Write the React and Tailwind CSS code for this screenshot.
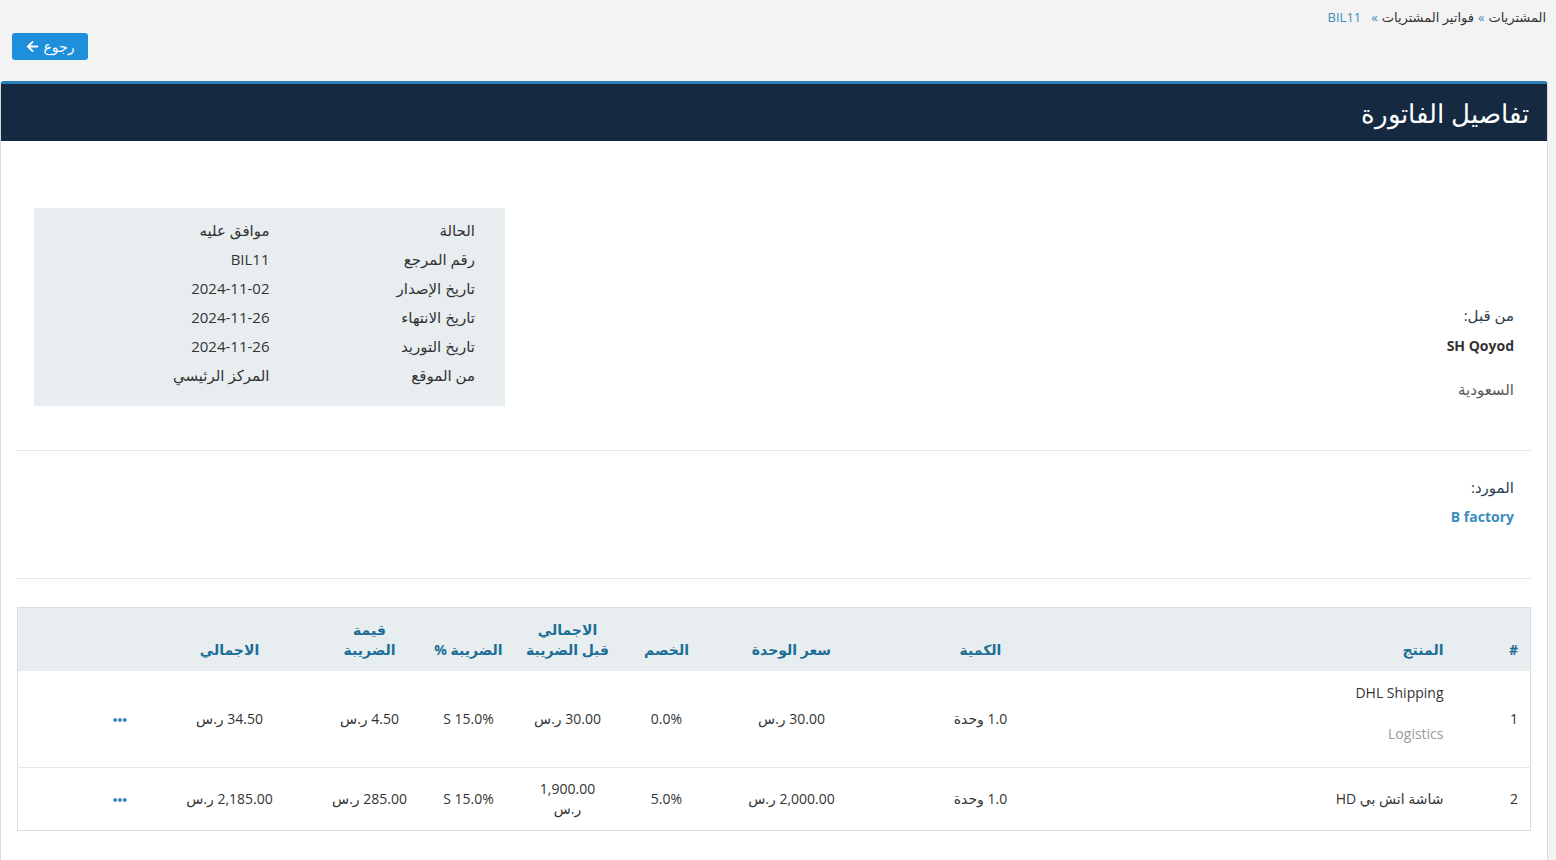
import React from "react";
import { FaArrowLeft, FaEllipsisH } from "react-icons/fa";

const infoRows = [
  ["الحالة", "موافق عليه"],
  ["رقم المرجع", "BIL11"],
  ["تاريخ الإصدار", "2024-11-02"],
  ["تاريخ الانتهاء", "2024-11-26"],
  ["تاريخ التوريد", "2024-11-26"],
  ["من الموقع", "المركز الرئيسي"],
];

export default function App() {
  return (
    <div
      dir="rtl"
      className="min-h-[860px] bg-[#f3f3f3] font-['Open_Sans','DejaVu_Sans',sans-serif] text-[#333]"
    >
      {/* breadcrumb */}
      <div className="flex items-center gap-[4px] pr-[10px] pt-[8px] h-[26px] text-[13px] leading-[18px]">
        <span>المشتريات</span>
        <span className="text-[#3c8dbc]">»</span>
        <span>فواتير المشتريات</span>
        <span className="text-[#3c8dbc]">»</span>
        <span className="text-[#3c8dbc] mr-[6px]">BIL11</span>
      </div>

      {/* back button */}
      <div className="flex justify-end pl-[12px] mt-[7px]">
        <button className="h-[27px] w-[76px] rounded-[3px] bg-[#1d8fdb] text-white text-[14px] flex items-center justify-center gap-[5px]">
          <span>رجوع</span>
          <FaArrowLeft className="w-[13px] h-[13px]" />
        </button>
      </div>

      {/* card */}
      <div className="mt-[21px] ml-[0px] mr-[8px] rounded-t-[4px] border-t-[3px] border-t-[#2b7fb8] border-x border-x-[#d9d9d9] bg-white pb-[31px]">
        <div className="h-[57px] bg-[#152a40] flex items-center pr-[18px]">
          <h1 className="text-[26px] font-light text-white leading-none">تفاصيل الفاتورة</h1>
        </div>

        <div className="pl-[16px] pr-[16px]">
          {/* section 1 */}
          <div className="flex justify-between px-[17px] pt-[67px] pb-[44px]">
            <div className="mt-[97px] text-[15px] leading-5">
              <div className="text-[#2c3e50]">من قبل:</div>
              <div className="mt-[11px] font-bold text-[14px] text-[#333]">SH Qoyod</div>
              <div className="mt-[23px] text-[#555]">السعودية</div>
            </div>
            <div className="w-[471px] bg-[#e8eef0] px-[30px] pt-[8px] pb-[16px]">
              {infoRows.map(([l, v]) => (
                <div key={l} className="grid grid-cols-2 h-[29px] items-center text-[15px]">
                  <span>{l}</span>
                  <span>{v}</span>
                </div>
              ))}
            </div>
          </div>

          <div className="border-t border-[#e6e6e6]" />

          {/* section 2 */}
          <div className="px-[17px] pt-[26px] pb-[51px] text-[15px] leading-5">
            <div className="text-[#2c3e50]">المورد:</div>
            <div className="mt-[10px] font-bold text-[14px] text-[#3c8dbc]">B factory</div>
          </div>

          <div className="border-t border-[#e6e6e6]" />

          {/* table */}
          <table className="mt-[28px] w-full table-fixed border-collapse border border-[#dcdcdc] text-[14px] leading-5">
            <thead>
              <tr className="bg-[#e8eef0] text-[#1c6e96] font-bold h-[63px]">
                <th className="w-[75px] text-right pr-[12px] pb-[11px] align-bottom">#</th>
                <th className="w-[363px] text-right pr-[12px] pb-[11px] align-bottom">المنتج</th>
                <th className="w-[224px] text-center pb-[11px] align-bottom">الكمية</th>
                <th className="w-[154px] text-center pb-[11px] align-bottom">سعر الوحدة</th>
                <th className="w-[96px] text-center pb-[11px] align-bottom">الخصم</th>
                <th className="w-[102px] text-center pb-[11px] align-bottom">
                  الاجمالي
                  <br />
                  قبل الضريبة
                </th>
                <th className="w-[96px] text-center pb-[11px] align-bottom whitespace-nowrap">الضريبة %</th>
                <th className="w-[102px] text-center pb-[11px] align-bottom">
                  قيمة
                  <br />
                  الضريبة
                </th>
                <th className="w-[178px] text-center pb-[11px] align-bottom">الاجمالي</th>
                <th className="pb-[11px] align-bottom"></th>
              </tr>
            </thead>
            <tbody>
              <tr className="border-b border-[#e6e6e6] h-[96px]">
                <td className="text-right pr-[12px] align-middle">1</td>
                <td className="text-right pr-[12px] pt-[12px] pb-[23px] align-top">
                  <div>DHL Shipping</div>
                  <div className="mt-[21px] text-[#999]">Logistics</div>
                </td>
                <td className="text-center whitespace-nowrap">1.0 وحدة</td>
                <td className="text-center whitespace-nowrap">30.00 ر.س</td>
                <td className="text-center whitespace-nowrap">0.0%</td>
                <td className="text-center whitespace-nowrap">30.00 ر.س</td>
                <td className="text-center whitespace-nowrap">S 15.0%</td>
                <td className="text-center whitespace-nowrap">4.50 ر.س</td>
                <td className="text-center whitespace-nowrap">34.50 ر.س</td>
                <td className="text-right pr-[14px]">
                  <FaEllipsisH className="inline-block w-[14px] h-[14px] text-[#3c8dbc]" />
                </td>
              </tr>
              <tr className="h-[62px]">
                <td className="text-right pr-[12px]">2</td>
                <td className="text-right pr-[12px] whitespace-nowrap">شاشة اتش بي HD</td>
                <td className="text-center whitespace-nowrap">1.0 وحدة</td>
                <td className="text-center whitespace-nowrap">2,000.00 ر.س</td>
                <td className="text-center whitespace-nowrap">5.0%</td>
                <td className="text-center py-[11px]">
                  1,900.00
                  <br />
                  ر.س
                </td>
                <td className="text-center whitespace-nowrap">S 15.0%</td>
                <td className="text-center whitespace-nowrap">285.00 ر.س</td>
                <td className="text-center whitespace-nowrap">2,185.00 ر.س</td>
                <td className="text-right pr-[14px]">
                  <FaEllipsisH className="inline-block w-[14px] h-[14px] text-[#3c8dbc]" />
                </td>
              </tr>
            </tbody>
          </table>
        </div>
      </div>
    </div>
  );
}
